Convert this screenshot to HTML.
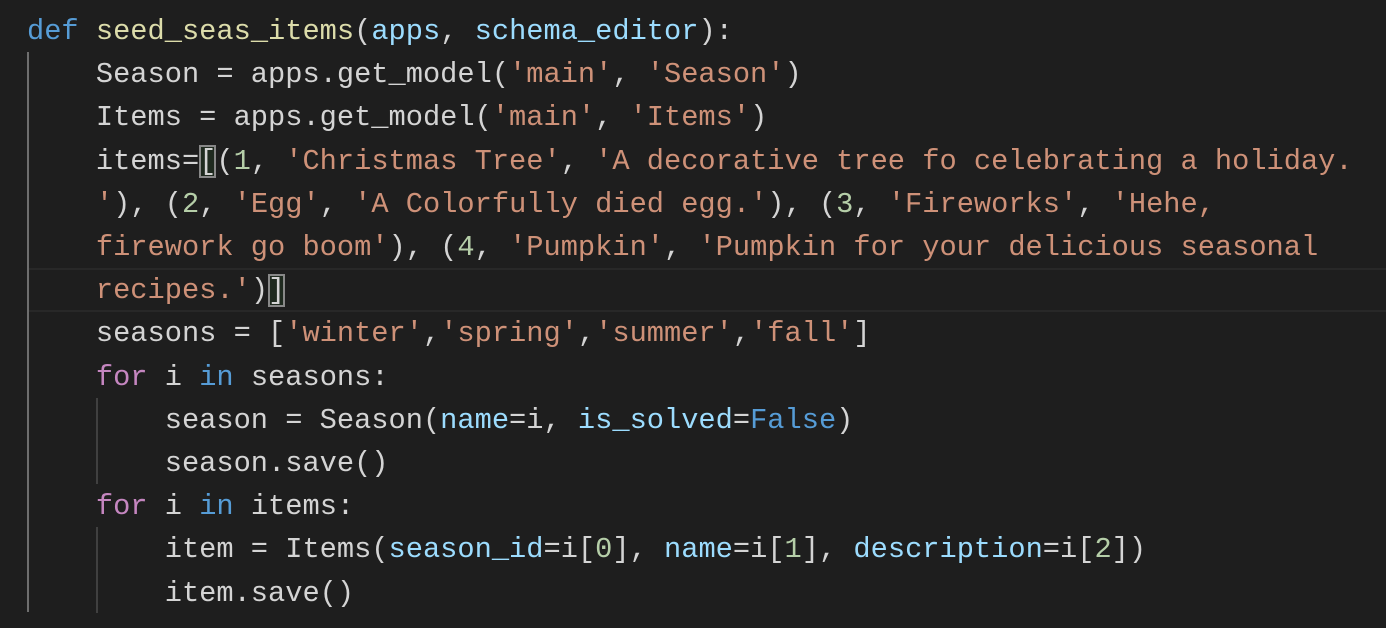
<!DOCTYPE html>
<html><head><style>
body{margin:0;background:#1e1e1e;width:1386px;height:628px;overflow:hidden;position:relative}
.code{position:absolute;left:27px;top:10px;font-family:"Liberation Mono",monospace;font-size:28.7px;line-height:43.2px;color:#d4d4d4;white-space:pre}
.k{color:#569cd6}.f{color:#dcdcaa}.p{color:#9cdcfe}.s{color:#ce9178}.n{color:#b5cea8}.c{color:#c586c0}
.g{position:absolute;width:2px;background:#404040}
.b{outline:2px solid #888;outline-offset:-2px;background:#1f2a1f}
.hl{position:absolute;left:29px;right:0;top:268px;height:44px;border-top:2px solid #282828;border-bottom:2px solid #282828;box-sizing:border-box}
</style></head><body>
<div class="hl"></div>
<div class="g" style="left:27px;top:52px;height:560px;background:#6e6e6e"></div>
<div class="g" style="left:96px;top:398px;height:86px"></div>
<div class="g" style="left:96px;top:527px;height:86px"></div>
<div class="code"><span class="k">def</span> <span class="f">seed_seas_items</span>(<span class="p">apps</span>, <span class="p">schema_editor</span>):
    Season = apps.get_model(<span class="s">'main'</span>, <span class="s">'Season'</span>)
    Items = apps.get_model(<span class="s">'main'</span>, <span class="s">'Items'</span>)
    items=<span class="b">[</span>(<span class="n">1</span>, <span class="s">'Christmas Tree'</span>, <span class="s">'A decorative tree fo celebrating a holiday.</span>
<span class="s">    '</span>), (<span class="n">2</span>, <span class="s">'Egg'</span>, <span class="s">'A Colorfully died egg.'</span>), (<span class="n">3</span>, <span class="s">'Fireworks'</span>, <span class="s">'Hehe,</span>
<span class="s">    firework go boom'</span>), (<span class="n">4</span>, <span class="s">'Pumpkin'</span>, <span class="s">'Pumpkin for your delicious seasonal</span>
<span class="s">    recipes.'</span>)<span class="b">]</span>
    seasons = [<span class="s">'winter'</span>,<span class="s">'spring'</span>,<span class="s">'summer'</span>,<span class="s">'fall'</span>]
    <span class="c">for</span> i <span class="k">in</span> seasons:
        season = Season(<span class="p">name</span>=i, <span class="p">is_solved</span>=<span class="k">False</span>)
        season.save()
    <span class="c">for</span> i <span class="k">in</span> items:
        item = Items(<span class="p">season_id</span>=i[<span class="n">0</span>], <span class="p">name</span>=i[<span class="n">1</span>], <span class="p">description</span>=i[<span class="n">2</span>])
        item.save()</div>
</body></html>
